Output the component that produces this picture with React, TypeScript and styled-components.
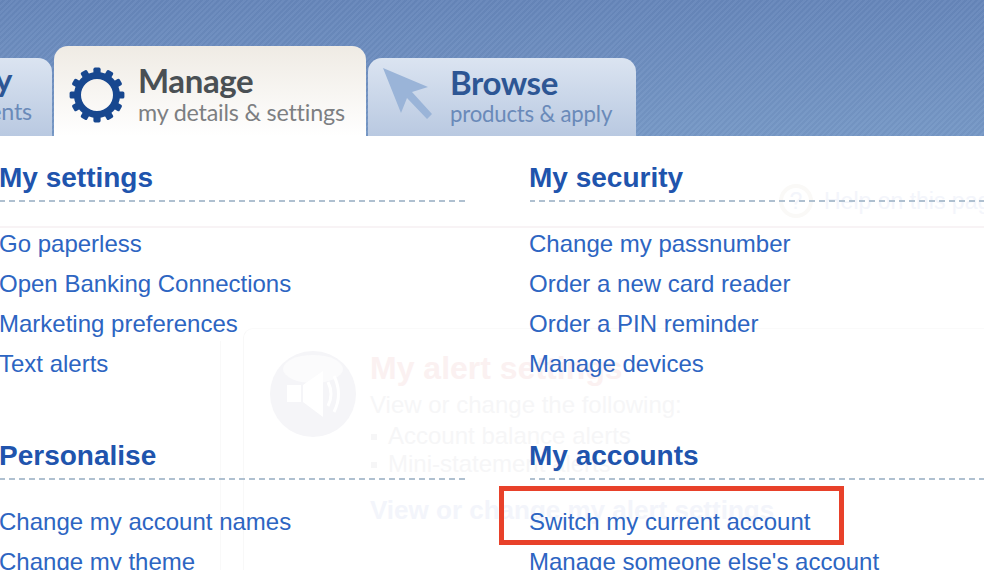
import React from 'react';
import styled, { createGlobalStyle } from 'styled-components';

const GlobalStyle = createGlobalStyle`
  html, body {
    margin: 0;
    padding: 0;
    width: 984px;
    height: 570px;
    overflow: hidden;
    background: #fff;
  }
`;

const menuLeft = [
  { title: 'My settings', links: ['Go paperless', 'Open Banking Connections', 'Marketing preferences', 'Text alerts'] },
  { title: 'Personalise', links: ['Change my account names', 'Change my theme'] },
];

const menuRight = [
  { title: 'My security', links: ['Change my passnumber', 'Order a new card reader', 'Order a PIN reminder', 'Manage devices'] },
  { title: 'My accounts', links: ['Switch my current account', "Manage someone else's account"] },
];

const GearIcon = () => (
  <svg width="58" height="58" viewBox="0 0 58 58">
    {Array.from({ length: 12 }, (_, i) => (
      <rect key={i} x="25.4" y="1.6" width="7.2" height="10" rx="1.6" fill="#17478f" transform={`rotate(${i * 30} 29 29)`} />
    ))}
    <circle cx="29" cy="29" r="19.5" fill="none" stroke="#17478f" strokeWidth="7" />
  </svg>
);

const ArrowIcon = () => (
  <svg width="56" height="56" viewBox="0 0 56 56">
    <polygon points="1,0 46,19 30,24 50,46 45,51 25,30 19,45" fill="#9ab4d8" />
  </svg>
);

const SpeakerIcon = () => (
  <svg width="90" height="90" viewBox="0 0 90 90">
    <circle cx="45" cy="45" r="43" fill="#f5f5f8" />
    <ellipse cx="45" cy="20" rx="30" ry="14" fill="#fbfbfc" />
    <rect x="19" y="36" width="14" height="17" fill="#fff" />
    <polygon points="35,36 55,22 55,68 35,53" fill="#fff" />
    <path d="M60 33 Q66 45 60 57 M66 27 Q75 45 66 63" fill="none" stroke="#fff" strokeWidth="3" />
  </svg>
);

export default function App() {
  return (
    <>
      <GlobalStyle />
      <Page>
        <Header>
          <LeftTab>
            <LeftTabTitle $active={false}>My</LeftTabTitle>
            <TabSub $active={false} $size={23.3}>payments</TabSub>
          </LeftTab>
          <ManageTab>
            <GearIcon />
            <TabText>
              <TabTitle $active>Manage</TabTitle>
              <TabSub $active $size={23.3}>my details &amp; settings</TabSub>
            </TabText>
          </ManageTab>
          <BrowseTab>
            <ArrowIcon />
            <TabText>
              <TabTitle $active={false}>Browse</TabTitle>
              <TabSub $active={false} $size={22.2}>products &amp; apply</TabSub>
            </TabText>
          </BrowseTab>
        </Header>

        <Menu>
          <Ghost aria-hidden="true">
            <GhostRule />
            <GhostHelp>
              <GhostHelpIcon>?</GhostHelpIcon>
              <span>Help on this page</span>
            </GhostHelp>
            <GhostEdge />
            <GhostCard>
              <SpeakerIcon />
              <GhostBody>
                <GhostTitle>My alert settings</GhostTitle>
                <GhostText>View or change the following:</GhostText>
                <GhostItem>Account balance alerts</GhostItem>
                <GhostItem>Mini-statement alerts</GhostItem>
                <GhostLink>View or change my alert settings</GhostLink>
              </GhostBody>
            </GhostCard>
          </Ghost>

          <LeftColumn>
            {menuLeft.map(section => (
              <Section key={section.title}>
                <Heading>{section.title}</Heading>
                <LinkList>
                  {section.links.map(link => (
                    <MenuLink key={link}>{link}</MenuLink>
                  ))}
                </LinkList>
              </Section>
            ))}
          </LeftColumn>
          <RightColumn>
            {menuRight.map(section => (
              <Section key={section.title}>
                <Heading>{section.title}</Heading>
                <LinkList>
                  {section.links.map(link => (
                    <MenuLink key={link}>{link}</MenuLink>
                  ))}
                </LinkList>
              </Section>
            ))}
          </RightColumn>
          <Highlight />
        </Menu>
      </Page>
    </>
  );
}

const Page = styled.div`
  width: 984px;
  height: 570px;
  overflow: hidden;
  background: #fff;
`;

const Header = styled.div`
  height: 136px;
  box-sizing: border-box;
  display: flex;
  align-items: flex-end;
  gap: 2px;
  background:
    repeating-linear-gradient(135deg, rgba(255, 255, 255, 0.04) 0, rgba(255, 255, 255, 0.04) 2px, rgba(0, 0, 0, 0.02) 2px, rgba(0, 0, 0, 0.02) 4px),
    linear-gradient(#6686ba, #7698c6);
`;

const LeftTab = styled.div`
  width: 52px;
  height: 78px;
  box-sizing: border-box;
  display: flex;
  flex-direction: column;
  align-items: flex-end;
  overflow: hidden;
  padding: 3px 20px 0 0;
  border-top-right-radius: 14px;
  background: linear-gradient(#dbe4f1, #b9c9e1);
`;

const ManageTab = styled.div`
  width: 312px;
  height: 90px;
  box-sizing: border-box;
  display: flex;
  align-items: flex-start;
  gap: 12px;
  padding: 20px 0 0 14px;
  border-radius: 14px 14px 0 0;
  background: linear-gradient(#efebe4, #ffffff);
`;

const BrowseTab = styled.div`
  width: 268px;
  height: 78px;
  box-sizing: border-box;
  display: flex;
  align-items: flex-start;
  gap: 12px;
  padding: 10px 0 0 14px;
  border-radius: 14px 14px 0 0;
  background: linear-gradient(#dbe4f1, #b9c9e1);
`;

const TabText = styled.div`
  display: flex;
  flex-direction: column;
  margin-top: -4px;
`;

const TabTitle = styled.div<{ $active: boolean }>`
  font-family: Lato, 'Open Sans', sans-serif;
  font-size: 33px;
  line-height: 37px;
  font-weight: 700;
  letter-spacing: -0.4px;
  white-space: nowrap;
  color: ${p => (p.$active ? '#4a5054' : '#2d5694')};
`;

const LeftTabTitle = styled(TabTitle)`
  margin-right: 20px;
`;

const TabSub = styled.div<{ $active: boolean; $size: number }>`
  font-family: Lato, 'Open Sans', sans-serif;
  font-size: ${p => p.$size}px;
  line-height: 26px;
  letter-spacing: -0.2px;
  white-space: nowrap;
  color: ${p => (p.$active ? '#7d7f82' : '#6a8ab9')};
`;

const Menu = styled.div`
  position: relative;
  height: 434px;
  display: grid;
  grid-template-columns: 469px 454px;
  column-gap: 61px;
  background: #fff;
`;

const LeftColumn = styled.div`
  position: relative;
  display: flex;
  flex-direction: column;
  gap: 55px;
  padding-top: 25px;
`;

const RightColumn = styled(LeftColumn)``;

const Section = styled.div`
  display: flex;
  flex-direction: column;
`;

const Heading = styled.h2`
  margin: 0;
  height: 41px;
  box-sizing: border-box;
  font-family: 'Liberation Sans', Arial, sans-serif;
  font-size: 28px;
  line-height: 34px;
  font-weight: 700;
  color: #2054ad;
  white-space: nowrap;
  text-indent: -1px;
  background: repeating-linear-gradient(90deg, #afc0d0 0, #afc0d0 5px, transparent 5px, transparent 9px, #afc0d0 9px, #afc0d0 10px) left bottom / 100% 2px no-repeat;
`;

const LinkList = styled.div`
  display: flex;
  flex-direction: column;
  padding-top: 22px;
`;

const MenuLink = styled.a`
  display: block;
  height: 40px;
  font-family: 'Liberation Sans', Arial, sans-serif;
  font-size: 24px;
  line-height: 40px;
  color: #2d65c2;
  white-space: nowrap;
  text-indent: -1px;
`;

const Highlight = styled.div`
  position: absolute;
  left: 499px;
  top: 350px;
  width: 345px;
  height: 59px;
  box-sizing: border-box;
  border: 5px solid #e8412a;
`;

const Ghost = styled.div`
  position: absolute;
  inset: 0;
  font-family: 'Liberation Sans', Arial, sans-serif;
  white-space: nowrap;
`;

const GhostRule = styled.div`
  position: absolute;
  left: 0;
  right: 0;
  top: 90px;
  height: 2px;
  background: #f8f3f5;
`;

const GhostHelp = styled.div`
  position: absolute;
  left: 779px;
  top: 48px;
  display: flex;
  align-items: center;
  gap: 11px;
  font-size: 23px;
  color: #f3f5fb;
`;

const GhostHelpIcon = styled.div`
  width: 26px;
  height: 26px;
  display: flex;
  align-items: center;
  justify-content: center;
  border: 4px solid #faf9f7;
  border-radius: 50%;
  color: #f3f5fb;
`;

const GhostEdge = styled.div`
  position: absolute;
  left: 220px;
  top: 205px;
  bottom: 0;
  width: 1px;
  background: #f9f9f9;
`;

const GhostCard = styled.div`
  position: absolute;
  left: 243px;
  top: 192px;
  width: 741px;
  height: 242px;
  box-sizing: border-box;
  display: flex;
  gap: 12px;
  padding: 20px 0 0 24px;
  border-top: 1px solid #fafafa;
  border-left: 1px solid #f8f8f8;
  border-top-left-radius: 10px;
`;

const GhostBody = styled.div`
  display: flex;
  flex-direction: column;
`;

const GhostTitle = styled.div`
  font-size: 32px;
  line-height: 39px;
  font-weight: 700;
  color: #fbf1f1;
`;

const GhostText = styled.div`
  font-size: 24px;
  line-height: 34px;
  color: #f6f6f7;
`;

const GhostItem = styled(GhostText)`
  position: relative;
  line-height: 28px;
  padding-left: 18px;

  &::before {
    content: '';
    position: absolute;
    left: 1px;
    top: 12px;
    width: 6px;
    height: 6px;
    background: #f6f6f7;
  }
`;

const GhostLink = styled.div`
  margin-top: 16px;
  font-size: 26px;
  line-height: 32px;
  font-weight: 700;
  color: #f3f5fb;
`;
